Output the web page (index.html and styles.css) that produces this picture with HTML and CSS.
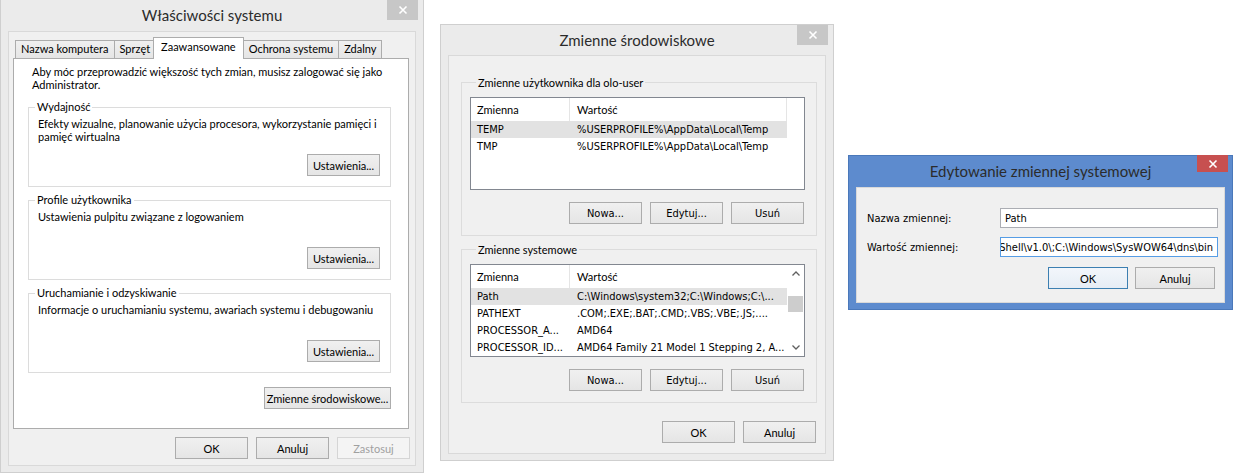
FILE: index.html
```html
<!DOCTYPE html>
<html lang="pl">
<head>
    <meta charset="UTF-8">
    <meta name="viewport" content="width=device-width, initial-scale=1.0">
    <title>Zmienne środowiskowe</title>
    <link rel="stylesheet" href="styles.css">
</head>
<body>
<div class="desktop">

    <!-- Właściwości systemu -->
    <div class="window inactive" id="system-properties">
        <div class="titlebar">
            <span class="title">Właściwości systemu</span>
            <span class="close-btn"><svg width="10" height="10" viewBox="0 0 10 10"><path d="M1.5 1.5 L8.5 8.5 M8.5 1.5 L1.5 8.5" /></svg></span>
        </div>
        <div class="client">
            <div class="tabs">
                <span class="tab">Nazwa komputera</span>
                <span class="tab">Sprzęt</span>
                <span class="tab active">Zaawansowane</span>
                <span class="tab">Ochrona systemu</span>
                <span class="tab">Zdalny</span>
            </div>
            <div class="tab-panel">
                <p class="intro">Aby móc przeprowadzić większość tych zmian, musisz zalogować się jako<br>Administrator.</p>

                <div class="group settings-group">
                    <div class="group-title">Wydajność</div>
                    <p class="group-text">Efekty wizualne, planowanie użycia procesora, wykorzystanie pamięci i<br>pamięć wirtualna</p>
                    <button class="btn">Ustawienia...</button>
                </div>

                <div class="group settings-group">
                    <div class="group-title">Profile użytkownika</div>
                    <p class="group-text">Ustawienia pulpitu związane z logowaniem</p>
                    <button class="btn">Ustawienia...</button>
                </div>

                <div class="group settings-group">
                    <div class="group-title">Uruchamianie i odzyskiwanie</div>
                    <p class="group-text">Informacje o uruchamianiu systemu, awariach systemu i debugowaniu</p>
                    <button class="btn">Ustawienia...</button>
                </div>

                <button class="btn env-btn">Zmienne środowiskowe...</button>
            </div>
            <div class="dialog-buttons">
                <button class="btn">OK</button>
                <button class="btn">Anuluj</button>
                <button class="btn" disabled>Zastosuj</button>
            </div>
        </div>
    </div>

    <!-- Zmienne środowiskowe -->
    <div class="window inactive" id="env-vars">
        <div class="titlebar">
            <span class="title">Zmienne środowiskowe</span>
            <span class="close-btn"><svg width="10" height="10" viewBox="0 0 10 10"><path d="M1.5 1.5 L8.5 8.5 M8.5 1.5 L1.5 8.5" /></svg></span>
        </div>
        <div class="client env-client">
            <div class="group list-group">
                <div class="group-title">Zmienne użytkownika dla olo-user</div>
                <div class="listview">
                    <div class="list-body">
                        <div class="list-header">
                            <span class="col-name">Zmienna</span>
                            <span class="col-value">Wartość</span>
                            <span class="col-rest"></span>
                        </div>
                        <div class="list-row selected">
                            <span class="col-name">TEMP</span>
                            <span class="col-value">%USERPROFILE%\AppData\Local\Temp</span>
                        </div>
                        <div class="list-row">
                            <span class="col-name">TMP</span>
                            <span class="col-value">%USERPROFILE%\AppData\Local\Temp</span>
                        </div>
                    </div>
                </div>
                <div class="list-buttons">
                    <button class="btn tahoma">Nowa...</button>
                    <button class="btn tahoma">Edytuj...</button>
                    <button class="btn tahoma">Usuń</button>
                </div>
            </div>

            <div class="group list-group">
                <div class="group-title">Zmienne systemowe</div>
                <div class="listview">
                    <div class="list-body">
                        <div class="list-header">
                            <span class="col-name">Zmienna</span>
                            <span class="col-value last">Wartość</span>
                        </div>
                        <div class="list-row selected">
                            <span class="col-name">Path</span>
                            <span class="col-value">C:\Windows\system32;C:\Windows;C:\...</span>
                        </div>
                        <div class="list-row">
                            <span class="col-name">PATHEXT</span>
                            <span class="col-value">.COM;.EXE;.BAT;.CMD;.VBS;.VBE;.JS;....</span>
                        </div>
                        <div class="list-row">
                            <span class="col-name">PROCESSOR_A...</span>
                            <span class="col-value">AMD64</span>
                        </div>
                        <div class="list-row">
                            <span class="col-name">PROCESSOR_ID...</span>
                            <span class="col-value">AMD64 Family 21 Model 1 Stepping 2, A...</span>
                        </div>
                    </div>
                    <div class="scrollbar">
                        <span class="scroll-arrow"><svg width="8" height="5" viewBox="0 0 8 5"><path d="M0.5 4.5 L4 1 L7.5 4.5" /></svg></span>
                        <span class="scroll-track"><span class="scroll-thumb"></span></span>
                        <span class="scroll-arrow"><svg width="8" height="5" viewBox="0 0 8 5"><path d="M0.5 0.5 L4 4 L7.5 0.5" /></svg></span>
                    </div>
                </div>
                <div class="list-buttons">
                    <button class="btn tahoma">Nowa...</button>
                    <button class="btn tahoma">Edytuj...</button>
                    <button class="btn tahoma">Usuń</button>
                </div>
            </div>

            <div class="dialog-buttons">
                <button class="btn">OK</button>
                <button class="btn">Anuluj</button>
            </div>
        </div>
    </div>

    <!-- Edytowanie zmiennej systemowej -->
    <div class="window active" id="edit-var">
        <div class="titlebar">
            <span class="title">Edytowanie zmiennej systemowej</span>
            <span class="close-btn"><svg width="10" height="10" viewBox="0 0 10 10"><path d="M1.5 1.5 L8.5 8.5 M8.5 1.5 L1.5 8.5" /></svg></span>
        </div>
        <div class="client edit-client">
            <div class="edit-form">
                <label class="edit-label">Nazwa zmiennej:</label>
                <div class="textbox"><span>Path</span></div>
                <label class="edit-label">Wartość zmiennej:</label>
                <div class="textbox focused scrolled"><span>PowerShell\v1.0\;C:\Windows\SysWOW64\dns\bin</span></div>
            </div>
            <div class="dialog-buttons">
                <button class="btn wide-btn default">OK</button>
                <button class="btn wide-btn">Anuluj</button>
            </div>
        </div>
    </div>

</div>
</body>
</html>
```

FILE: styles.css
```css
/* Windows 8 style dialogs */
* {
    box-sizing: border-box;
}

body {
    margin: 0;
    background: #fff;
    font-family: "Lato", "Liberation Sans", sans-serif;
    font-size: 11px;
    color: #000;
}

p {
    margin: 0;
    white-space: nowrap;
}

.desktop {
    position: relative;
    width: 1235px;
    height: 475px;
    overflow: hidden;
}

/* window frame */
.window {
    position: absolute; /* windows placed on the desktop */
    display: flex;
    flex-direction: column;
    padding: 0 7px 6px 7px;
    border: 1px solid #cfcfcf;
    background: #ebebeb;
}

.window.active {
    background: #5d8bce;
    border-color: #4a78ba;
}

#system-properties {
    left: 0;
    top: -1px;
    width: 424px;
    height: 474px;
}

#env-vars {
    left: 440px;
    top: 24px;
    width: 394px;
    height: 437px;
}

#edit-var {
    left: 848px;
    top: 155px;
    width: 385px;
    height: 155px;
}

.titlebar {
    height: 31px;
    display: flex;
    align-items: center;
    justify-content: center;
    position: relative;
}

#env-vars .titlebar {
    height: 30px;
}

.title {
    font-size: 15px;
    color: #2b2b2b;
    margin-top: -1px;
}

.close-btn {
    position: absolute; /* sits over the title bar corner */
    top: 0;
    right: -2px;
    width: 31px;
    height: 20px;
    background: #c7c7c7;
    display: flex;
    align-items: center;
    justify-content: center;
}

.active .close-btn {
    top: -1px;
    right: -3px;
    height: 17px;
    background: #c75050;
}

.close-btn path {
    stroke: #fff;
    stroke-width: 1.6;
    fill: none;
}

.client {
    flex: 1;
    display: flex;
    flex-direction: column;
    background: #f0f0f0;
    border: 1px solid #d9d9d9;
}

/* buttons */
.btn {
    width: 73px;
    height: 22px;
    padding: 0;
    font-family: inherit;
    font-size: 11px;
    color: #000;
    white-space: nowrap;
    border: 1px solid #acacac;
    background: linear-gradient(#f0f0f0, #e5e5e5);
}

.btn:disabled {
    color: #a0a0a0;
    border-color: #d5d5d5;
    background: #f4f4f4;
}

.btn.tahoma {
    font-family: "DejaVu Sans Condensed", "DejaVu Sans", sans-serif;
    font-size: 11px;
}

.dialog-buttons {
    display: flex;
    justify-content: flex-end;
    gap: 8px;
}

/* property sheet */
#system-properties .client {
    padding: 5px 5px 6px 4px;
}

.tabs {
    display: flex;
    align-items: flex-end;
    height: 21px;
    padding-left: 2px;
    position: relative;
    z-index: 1;
}

.tab {
    height: 18px;
    line-height: 16px;
    padding: 0 5px;
    border: 1px solid #acacac;
    border-bottom: none;
    background: linear-gradient(#f0f0f0, #e5e5e5);
    margin-right: -1px;
    white-space: nowrap;
}

.tab.active {
    height: 22px;
    line-height: 18px;
    margin: 0 -1px -1px -2px;
    padding: 0 7px;
    background: #fff;
    position: relative;
}

.tab-panel {
    flex: 1;
    display: flex;
    flex-direction: column;
    padding: 6px 17px 0 14px;
    margin-right: 1px;
    background: #fff;
    border: 1px solid #acacac;
}

.intro {
    line-height: 13px;
    padding-left: 4px;
}

.group {
    border: 1px solid #dcdcdc;
}

.group-title {
    width: fit-content;
    margin: -8px 0 0 6px;
    padding: 0 2px;
    line-height: 14px;
    background: #fff;
}

.settings-group {
    height: 80px;
    margin-top: 13px;
    display: flex;
    flex-direction: column;
    padding: 0 10px 10px 8px;
}

.settings-group:first-of-type {
    margin-top: 16px;
}

.settings-group .group-title {
    margin-left: -2px;
}

.group-text {
    margin-top: 3px;
    line-height: 13px;
    padding-left: 1px;
}

.settings-group .btn {
    margin-top: auto;
    align-self: flex-end;
}

.env-btn {
    width: 127px;
    align-self: flex-end;
    margin-top: 14px;
}

#system-properties .dialog-buttons {
    margin-top: 8px;
}

/* environment variables dialog */
.env-client {
    padding: 26px 8px 10px 12px;
}

.list-group {
    padding: 0 11px 11px 8px;
}

.list-group + .list-group {
    margin-top: 13px;
}

.list-group .group-title {
    margin-top: -7px;
    background: #f0f0f0;
}

.listview {
    display: flex;
    height: 93px;
    margin-top: 7px;
    background: #fff;
    border: 1px solid #828790;
    overflow: hidden;
}

.list-body {
    flex: 1;
}

.list-header {
    display: flex;
    height: 23px;
    align-items: center;
}

.list-header span {
    height: 100%;
    display: flex;
    align-items: center;
    border-right: 1px solid #e5e5e5;
}

.list-header .col-rest {
    flex: 1;
    border-right: none;
}

.list-header .col-value.last {
    border-right: none;
}

.col-name {
    width: 99px;
    padding-left: 6px;
    white-space: nowrap;
}

.col-value {
    width: 217px;
    padding-left: 7px;
    white-space: nowrap;
}

.list-row {
    display: flex;
    width: 316px;
    height: 17px;
    line-height: 17px;
    font-family: "DejaVu Sans Condensed", "DejaVu Sans", sans-serif;
    font-size: 11px;
}

.list-row.selected {
    background: #e2e2e2;
}

.scrollbar {
    width: 17px;
    display: flex;
    flex-direction: column;
    background: #fff;
}

.scroll-arrow {
    height: 17px;
    display: flex;
    align-items: center;
    justify-content: center;
}

.scroll-arrow path {
    stroke: #606060;
    stroke-width: 1.3;
    fill: none;
}

.scroll-track {
    flex: 1;
    padding: 14px 1px 0 1px;
}

.scroll-thumb {
    display: block;
    height: 16px;
    background: #cdcdcd;
}

.list-buttons {
    display: flex;
    justify-content: flex-end;
    gap: 8px;
    margin-top: 12px;
    padding-right: 1px;
}

.env-client .dialog-buttons {
    margin-top: auto;
    padding-right: 1px;
}

/* edit variable dialog */
.edit-client {
    padding: 20px 6px 13px 10px;
}

.edit-form {
    display: grid;
    grid-template-columns: 133px 1fr;
    row-gap: 9px;
    align-items: center;
}

.edit-label {
    font-family: "DejaVu Sans Condensed", "DejaVu Sans", sans-serif;
    font-size: 11px;
}

.textbox {
    height: 20px;
    display: flex;
    align-items: center;
    padding: 0 4px;
    background: #fff;
    border: 1px solid #abadb3;
    font-family: "DejaVu Sans Condensed", "DejaVu Sans", sans-serif;
    font-size: 11px;
    white-space: nowrap;
    overflow: hidden;
}

.textbox.focused {
    border-color: #569de5;
}

.textbox.scrolled {
    justify-content: flex-end;
}

.edit-client .dialog-buttons {
    margin-top: auto;
    gap: 7px;
    padding-right: 3px;
}

.wide-btn {
    width: 80px;
}

.btn.default {
    border-color: #3c7fb1;
    background: linear-gradient(#f2f6fb, #e6edf5);
}
```
